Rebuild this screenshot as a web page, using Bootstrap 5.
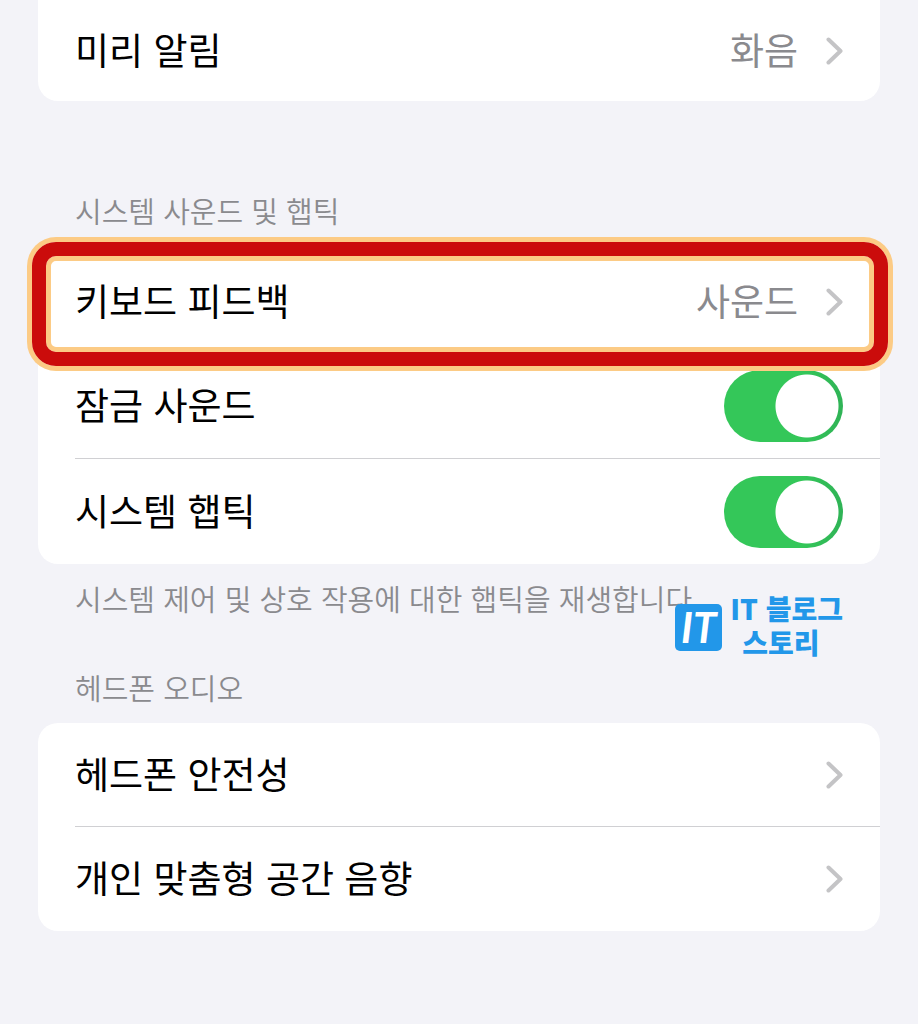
<!DOCTYPE html>
<html lang="ko">
<head>
<meta charset="utf-8">
<meta name="viewport" content="width=device-width, initial-scale=1">
<title>사운드 및 햅틱</title>
<link href="https://cdn.jsdelivr.net/npm/bootstrap@5.3.0/dist/css/bootstrap.min.css" rel="stylesheet">
<style>
  body {
    background: #f3f3f8;
    color: #000;
    font-family: "Noto Sans CJK KR", sans-serif;
    font-size: 37px;
    line-height: 48px;
  }
  .settings { padding: 0 38px 93px; }
  .group {
    background: #fff;
    border-radius: 20px;
  }
  .group-cut { border-radius: 0 0 20px 20px; }
  .group .setting {
    background: transparent;
    color: #000;
    border: 0;
    padding: 0 0 0 37px;
  }
  .setting-body {
    min-height: 105px;
    padding-right: 37px;
    column-gap: 28px;
  }
  .setting-name, .setting-value { padding-bottom: 4px; }
  .group-compact .setting-body { min-height: 104px; }
  .group-cut .setting-body { min-height: 101px; }
  .ruled .setting-body { border-bottom: 1px solid #d0d0d3; }
  .setting-value { color: #8a8a8e; }
  .chevron { width: 17px; height: 28px; flex: none; }
  .caption {
    color: #8a8a8e;
    font-size: 29px;
    line-height: 40px;
    font-weight: 350;
    margin: 0;
    padding: 0 37px;
  }
  .caption-first { margin: 89px 0 19px; }
  .caption-note { padding-top: 14px; }
  .caption-next { margin: 49px 0 16px; }
  .group .toggle {
    width: 119px;
    height: 72px;
    margin: 0;
    border: 0;
    border-radius: 36px;
    background: radial-gradient(circle 32px at 83px 36px, #fff 31px, transparent 32px), linear-gradient(90deg, #34c759 65%, #2fb356);
  }
  .highlight {
    inset: -7px -8px -12px -6px;
    border: 14px solid #cb0c0b;
    border-radius: 24px;
    box-shadow: 0 0 0 5px #fccb85, inset 0 0 0 5px #fccb85;
    z-index: 3;
    pointer-events: none;
  }
  .watermark {
    top: 27px;
    right: 37px;
    gap: 8px;
    color: #2297e9;
    font-size: 28px;
    line-height: 34px;
    font-weight: 900;
  }
  .watermark-logo {
    width: 47px;
    height: 47px;
    margin-top: 13px;
    border-radius: 5px;
    background: #2297e9;
    color: #fff;
    font: italic 700 42px/47px Lato, sans-serif;
  }
  .watermark-second { padding-left: 12px; }
</style>
</head>
<body>
<svg class="d-none" aria-hidden="true">
  <symbol id="chevron" viewBox="0 0 17 28">
    <path d="M2.500 2.500 14.500 14 2.500 25.500" fill="none" stroke="#c4c4c6" stroke-width="4" stroke-linecap="round" stroke-linejoin="round"/>
  </symbol>
</svg>

<main class="settings">
  <div class="list-group group group-cut">
    <a href="#" class="list-group-item setting">
      <span class="setting-body d-flex align-items-center">
        <span class="setting-name me-auto">미리 알림</span>
        <span class="setting-value">화음</span>
        <svg class="chevron" aria-hidden="true"><use href="#chevron"/></svg>
      </span>
    </a>
  </div>

  <h2 class="caption caption-first">시스템 사운드 및 햅틱</h2>
  <div class="list-group group">
    <a href="#" class="list-group-item setting position-relative">
      <span class="setting-body d-flex align-items-center">
        <span class="setting-name me-auto">키보드 피드백</span>
        <span class="setting-value">사운드</span>
        <svg class="chevron" aria-hidden="true"><use href="#chevron"/></svg>
      </span>
      <span class="highlight position-absolute"></span>
    </a>
    <div class="list-group-item setting ruled">
      <div class="setting-body d-flex align-items-center">
        <label class="setting-name me-auto" for="lock-sound">잠금 사운드</label>
        <input class="form-check-input toggle" type="checkbox" role="switch" id="lock-sound" checked>
      </div>
    </div>
    <div class="list-group-item setting">
      <div class="setting-body d-flex align-items-center">
        <label class="setting-name me-auto" for="system-haptic">시스템 햅틱</label>
        <input class="form-check-input toggle" type="checkbox" role="switch" id="system-haptic" checked>
      </div>
    </div>
  </div>
  <div class="position-relative">
    <p class="caption caption-note">시스템 제어 및 상호 작용에 대한 햅틱을 재생합니다.</p>
    <div class="watermark position-absolute d-flex align-items-start">
      <span class="watermark-logo text-center">IT</span>
      <span>IT 블로그<br><span class="watermark-second">스토리</span></span>
    </div>
  </div>

  <h2 class="caption caption-next">헤드폰 오디오</h2>
  <div class="list-group group group-compact">
    <a href="#" class="list-group-item setting ruled">
      <span class="setting-body d-flex align-items-center">
        <span class="setting-name me-auto">헤드폰 안전성</span>
        <svg class="chevron" aria-hidden="true"><use href="#chevron"/></svg>
      </span>
    </a>
    <a href="#" class="list-group-item setting">
      <span class="setting-body d-flex align-items-center">
        <span class="setting-name me-auto">개인 맞춤형 공간 음향</span>
        <svg class="chevron" aria-hidden="true"><use href="#chevron"/></svg>
      </span>
    </a>
  </div>
</main>
<script src="https://cdn.jsdelivr.net/npm/bootstrap@5.3.0/dist/js/bootstrap.bundle.min.js"></script>
</body>
</html>
